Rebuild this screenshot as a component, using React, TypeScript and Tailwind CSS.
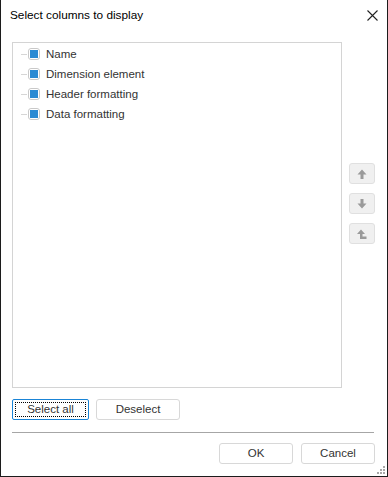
import React from 'react';

const items = ['Name', 'Dimension element', 'Header formatting', 'Data formatting'];

function Check() {
    return (
        <span className="flex h-[12px] w-[12px] items-center justify-center rounded-[3px] border border-[#c9c9c9] bg-white">
            <span className="h-[8px] w-[8px] bg-[#2b8ad3]" />
        </span>
    );
}

function SideButton({ children }: { children: React.ReactNode }) {
    return (
        <button className="flex h-[21px] w-[26px] items-center justify-center rounded-[3px] border border-[#e0e0e0] bg-[#f0f0f0]">
            {children}
        </button>
    );
}

export default function App() {
    return (
        <div
            className="flex h-[477px] w-[388px] flex-col border-x border-b border-[#1c1c1c] bg-white text-[11.5px] text-[#333]"
            style={{ fontFamily: '"Liberation Sans", Arial, sans-serif' }}
        >
            {/* заголовок */}
            <div className="flex h-[30px] items-center justify-between pl-[9px] pr-[9px] pt-[1px]">
                <span className="text-[11.8px] text-black">Select columns to display</span>
                <svg width="11" height="11" viewBox="0 0 11 11">
                    <path d="M0.5 0.5 L10.5 10.5 M10.5 0.5 L0.5 10.5" stroke="#222" strokeWidth="1.1" />
                </svg>
            </div>

            <div className="mt-[12px] flex pl-[11px]">
                <div className="h-[346px] w-[330px] border border-[#d4d4d4] pt-[1px]">
                    {items.map((t) => (
                        <div key={t} className="flex h-[20px] items-center">
                            <span className="ml-[8px] h-px w-[6px] bg-[#d6d6d6]" />
                            <span className="ml-[1px]">
                                <Check />
                            </span>
                            <span className="ml-[6px] pt-[1px] leading-none">{t}</span>
                        </div>
                    ))}
                </div>

                <div className="ml-[7px] flex flex-col gap-[9px] pt-[121px]">
                    <SideButton>
                        <svg width="12" height="12" viewBox="0 0 12 12">
                            <path d="M6 1.5 L10.5 6.5 H7.5 V11 H4.5 V6.5 H1.5 Z" fill="#9a9a9a" />
                        </svg>
                    </SideButton>
                    <SideButton>
                        <svg width="12" height="12" viewBox="0 0 12 12">
                            <path d="M6 10.5 L10.5 5.5 H7.5 V1 H4.5 V5.5 H1.5 Z" fill="#9a9a9a" />
                        </svg>
                    </SideButton>
                    <SideButton>
                        <svg width="12" height="12" viewBox="0 0 12 12">
                            <path d="M5 1.5 L9 6 H6.5 V8.5 H10.5 V11 H4 V6 H1 Z" fill="#9a9a9a" />
                        </svg>
                    </SideButton>
                </div>
            </div>

            <div className="mt-[11px] flex gap-[7px] pl-[11px]">
                <button className="flex h-[21px] w-[77px] items-center justify-center rounded-[2px] border border-[#1a84d6] bg-white p-[2px]">
                    <span className="flex h-full w-full items-center justify-center border border-dotted border-black">
                        Select all
                    </span>
                </button>
                <button className="flex h-[21px] w-[84px] items-center justify-center rounded-[3px] border border-[#d8d8d8] bg-white">
                    Deselect
                </button>
            </div>

            <div className="ml-[11px] mt-[12px] h-px w-[362px] bg-[#a6a6a6]" />

            <div className="mt-[10px] flex justify-end gap-[8px] pr-[12px]">
                <button className="flex h-[21px] w-[74px] items-center justify-center rounded-[3px] border border-[#d8d8d8] bg-white">
                    OK
                </button>
                <button className="flex h-[21px] w-[74px] items-center justify-center rounded-[3px] border border-[#d8d8d8] bg-white">
                    Cancel
                </button>
            </div>

            {/* уголок для изменения размера */}
            <div className="mt-auto flex justify-end pb-[1px] pr-[1px]">
                <svg width="10" height="10" viewBox="0 0 10 10">
                    <rect x="7" y="1" width="2" height="2" fill="#a8a8a8" />
                    <rect x="4" y="4" width="2" height="2" fill="#a8a8a8" />
                    <rect x="7" y="4" width="2" height="2" fill="#a8a8a8" />
                    <rect x="1" y="7" width="2" height="2" fill="#a8a8a8" />
                    <rect x="4" y="7" width="2" height="2" fill="#a8a8a8" />
                    <rect x="7" y="7" width="2" height="2" fill="#a8a8a8" />
                </svg>
            </div>
        </div>
    );
}
